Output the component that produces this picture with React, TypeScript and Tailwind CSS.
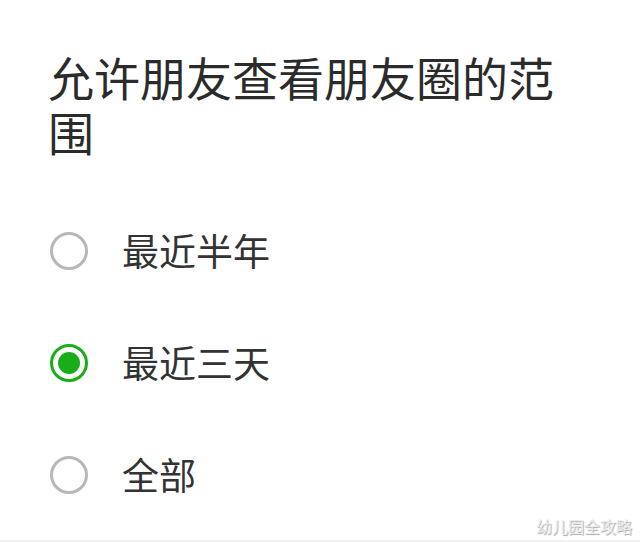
import React from "react";

const options = [
  { label: "最近半年", checked: false },
  { label: "最近三天", checked: true },
  { label: "全部", checked: false },
];

function Radio({ checked }: { checked: boolean }) {
  if (checked) {
    return (
      <div className="w-[38px] h-[38px] rounded-full border-[3px] border-[#1aad19] flex items-center justify-center shrink-0">
        <div className="w-[22px] h-[22px] rounded-full bg-[#1aad19]" />
      </div>
    );
  }
  return <div className="w-[38px] h-[38px] rounded-full border-[3px] border-[#b8b8b8] shrink-0" />;
}

export default function App() {
  return (
    <div
      className="w-[640px] h-[542px] bg-white flex flex-col relative overflow-hidden"
      style={{ fontFamily: '"Noto Sans CJK SC", "Noto Sans", sans-serif' }}
    >
      <div className="pl-[48px] w-[570px] pt-[49px] text-[46px] leading-[55px] text-[#2b2b2b]">
        允许朋友查看朋友圈的范围
      </div>
      <div className="flex flex-col mt-[36px]">
        {options.map((o) => (
          <div key={o.label} className="flex items-center h-[112px] pl-[50px]">
            <Radio checked={o.checked} />
            <span className="ml-[34px] text-[37px] text-[#333333]">{o.label}</span>
          </div>
        ))}
      </div>
      <div className="absolute right-[8px] bottom-[8px] text-[16px] leading-none text-[#ececec] [text-shadow:1px_1px_1px_rgba(0,0,0,0.35)]">
        幼儿园全攻略
      </div>
      <div className="absolute left-0 right-0 bottom-0 h-[2px] bg-[#f2f2f2]" />
    </div>
  );
}
